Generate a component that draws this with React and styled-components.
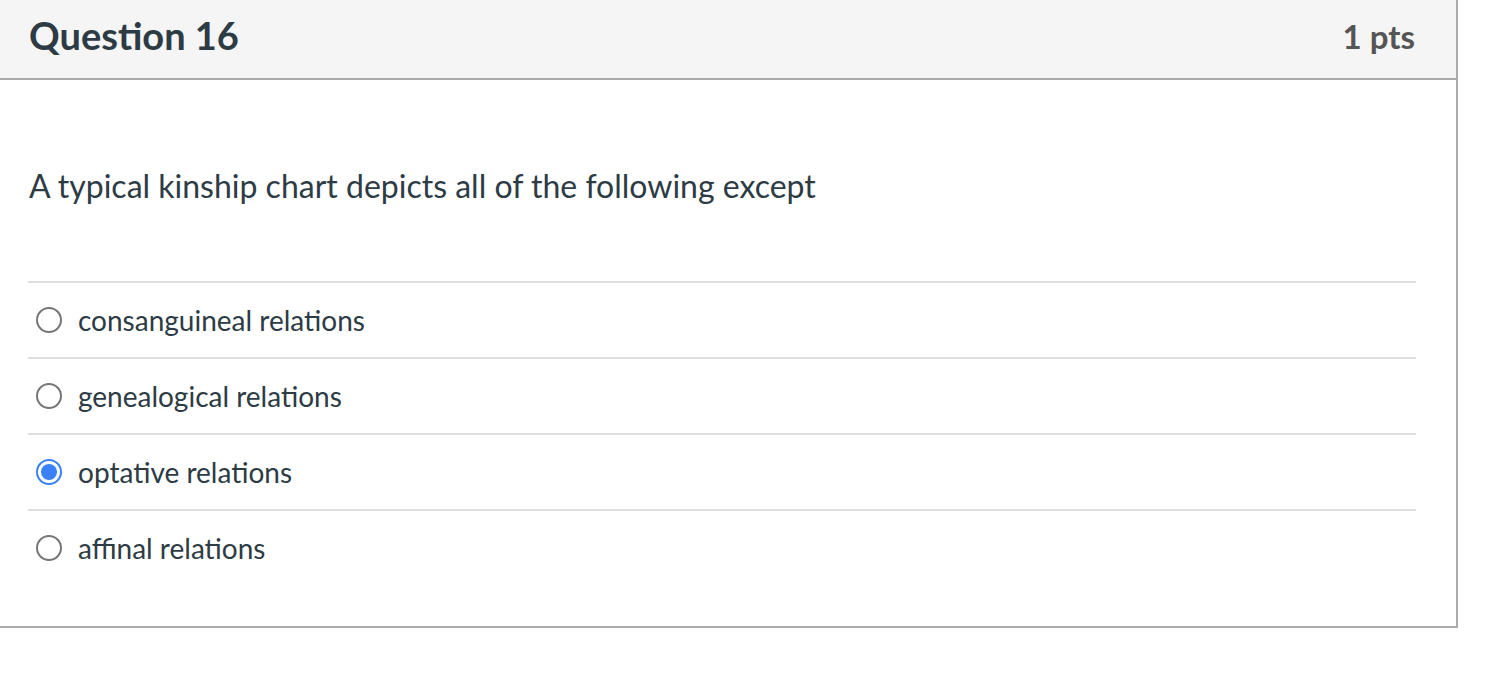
import React from "react";
import styled, { createGlobalStyle } from "styled-components";

const GlobalStyle = createGlobalStyle`
  html, body {
    margin: 0;
    padding: 0;
    background: #fff;
    font-family: Lato, "Open Sans", sans-serif;
  }
`;

const Card = styled.div`
  width: 1456px;
  border-right: 2px solid #aaaaaa;
  border-bottom: 2px solid #aaaaaa;
  background: #fff;
`;

const Header = styled.div`
  height: 80px;
  box-sizing: border-box;
  background: #f5f5f5;
  border-bottom: 2px solid #aaaaaa;
  display: flex;
  align-items: center;
  justify-content: space-between;
  padding: 0 41px 8px 29px;
`;

const Title = styled.h2`
  margin: 0;
  font-size: 38px;
  font-weight: 700;
  color: #2d3b45;
`;

const Points = styled.div`
  font-size: 33px;
  font-weight: 700;
  color: #555555;
  margin-top: 1px;
`;

const Body = styled.div`
  padding: 86px 40px 41px 28px;
`;

const QuestionText = styled.p`
  margin: 0 0 75px 1px;
  font-size: 32px;
  line-height: 40px;
  color: #2d3b45;
`;

const Answers = styled.div`
  display: flex;
  flex-direction: column;
`;

const Answer = styled.label`
  display: flex;
  align-items: center;
  gap: 16px;
  height: 76px;
  box-sizing: border-box;
  border-top: 2px solid #dddddd;
  padding-left: 8px;
  font-size: 28px;
  color: #2d3b45;
`;

const Radio = styled.span`
  width: 26px;
  height: 26px;
  box-sizing: border-box;
  border-radius: 50%;
  border: 2px solid ${(p) => (p.checked ? "#3a80f6" : "#767676")};
  display: flex;
  align-items: center;
  justify-content: center;
  flex-shrink: 0;

  &::after {
    content: "";
    width: 16px;
    height: 16px;
    border-radius: 50%;
    background: ${(p) => (p.checked ? "#3a80f6" : "transparent")};
  }
`;

const options = [
  "consanguineal relations",
  "genealogical relations",
  "optative relations",
  "affinal relations",
];

export default function App() {
  return (
    <>
      <GlobalStyle />
      <Card>
        <Header>
          <Title>Question 16</Title>
          <Points>1 pts</Points>
        </Header>
        <Body>
          <QuestionText>
            A typical kinship chart depicts all of the following except
          </QuestionText>
          <Answers>
            {options.map((o, i) => (
              <Answer key={o}>
                <Radio checked={i === 2} />
                {o}
              </Answer>
            ))}
          </Answers>
        </Body>
      </Card>
    </>
  );
}
